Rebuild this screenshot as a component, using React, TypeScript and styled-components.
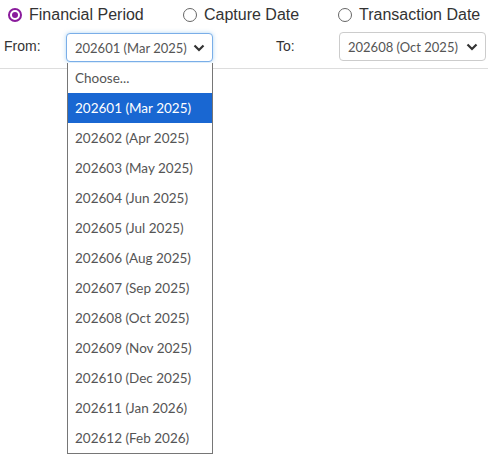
import React from "react";
import styled, { createGlobalStyle } from "styled-components";

const periods = [
  "202601 (Mar 2025)",
  "202602 (Apr 2025)",
  "202603 (May 2025)",
  "202604 (Jun 2025)",
  "202605 (Jul 2025)",
  "202606 (Aug 2025)",
  "202607 (Sep 2025)",
  "202608 (Oct 2025)",
  "202609 (Nov 2025)",
  "202610 (Dec 2025)",
  "202611 (Jan 2026)",
  "202612 (Feb 2026)",
];

const GlobalStyle = createGlobalStyle`
  html, body {
    margin: 0;
    padding: 0;
    background: #fff;
    font-family: "Liberation Sans", Arial, sans-serif;
  }
`;

const Chevron = () => (
  <svg width="12" height="8" viewBox="0 0 12 8">
    <path d="M1.5 1.5 L6 6 L10.5 1.5" fill="none" stroke="#333" strokeWidth="2.2" />
  </svg>
);

const App: React.FC = () => {
  return (
    <>
      <GlobalStyle />
      <Page>
        <RadioRow>
          <RadioItem width={175}>
            <RadioDot checked />
            <RadioLabel>Financial Period</RadioLabel>
          </RadioItem>
          <RadioItem width={155}>
            <RadioDot />
            <RadioLabel>Capture Date</RadioLabel>
          </RadioItem>
          <RadioItem width={150}>
            <RadioDot />
            <RadioLabel>Transaction Date</RadioLabel>
          </RadioItem>
        </RadioRow>
        <FilterRow>
          <FieldLabel>From:</FieldLabel>
          <SelectWrap>
            <SelectBox focused>
              <span>202601 (Mar 2025)</span>
              <Chevron />
            </SelectBox>
            <OptionList>
              <Option>Choose...</Option>
              {periods.map((p, i) => (
                <Option key={p} active={i === 0}>
                  {p}
                </Option>
              ))}
            </OptionList>
          </SelectWrap>
          <FieldLabel>To:</FieldLabel>
          <SelectBox>
            <span>202608 (Oct 2025)</span>
            <Chevron />
          </SelectBox>
        </FilterRow>
      </Page>
    </>
  );
};

export default App;

const Page = styled.div`
  width: 488px;
  height: 455px;
  position: relative;
  overflow: hidden;
`;

const RadioRow = styled.div`
  display: flex;
  align-items: center;
  padding: 5px 0 0 8px;
  height: 19px;
`;

const RadioItem = styled.label<{ width: number }>`
  display: flex;
  align-items: center;
  width: ${p => p.width}px;
  flex: none;
`;

const RadioDot = styled.span<{ checked?: boolean }>`
  box-sizing: border-box;
  width: 14px;
  height: 14px;
  border-radius: 50%;
  border: ${p => (p.checked ? "2px solid #8a1b9c" : "1px solid #666")};
  display: flex;
  align-items: center;
  justify-content: center;
  margin-right: 7px;
  flex: none;

  &::after {
    content: "";
    display: ${p => (p.checked ? "block" : "none")};
    width: 6px;
    height: 6px;
    border-radius: 50%;
    background: #8a1b9c;
  }
`;

const RadioLabel = styled.span`
  font-size: 16px;
  color: #333;
  white-space: nowrap;
`;

const FilterRow = styled.div`
  display: grid;
  grid-template-columns: 62px 210px 63px 147px;
  align-items: start;
  padding: 8px 0 0 4px;
  height: 36px;
  border-bottom: 1px solid #ddd;
`;

const FieldLabel = styled.span`
  font-size: 14px;
  color: #333;
  padding-top: 6px;
`;

const SelectWrap = styled.div`
  position: relative;
  width: 147px;
`;

const SelectBox = styled.div<{ focused?: boolean }>`
  box-sizing: border-box;
  height: 29px;
  width: 147px;
  display: flex;
  align-items: center;
  justify-content: space-between;
  padding: 0 7px 0 8px;
  border: 1px solid ${p => (p.focused ? "#7aaee8" : "#ccc")};
  border-radius: 4px;
  box-shadow: ${p => (p.focused ? "0 0 4px rgba(102, 175, 233, 0.5)" : "none")};
  font-family: Lato, "Open Sans", sans-serif;
  font-size: 13px;
  color: #555;
  background: #fff;
  margin-top: ${p => (p.focused ? "1px" : "0")};
`;

const OptionList = styled.div`
  position: absolute;
  top: 31px;
  left: 1px;
  width: 146px;
  box-sizing: border-box;
  border: 1px solid #767676;
  border-top: none;
  background: #fff;
  z-index: 2;
`;

const Option = styled.div<{ active?: boolean }>`
  height: 30px;
  line-height: 30px;
  padding-left: 7px;
  font-family: Lato, "Open Sans", sans-serif;
  font-size: 13.5px;
  color: ${p => (p.active ? "#fff" : "#555")};
  background: ${p => (p.active ? "#1967d2" : "#fff")};
  white-space: nowrap;
`;
